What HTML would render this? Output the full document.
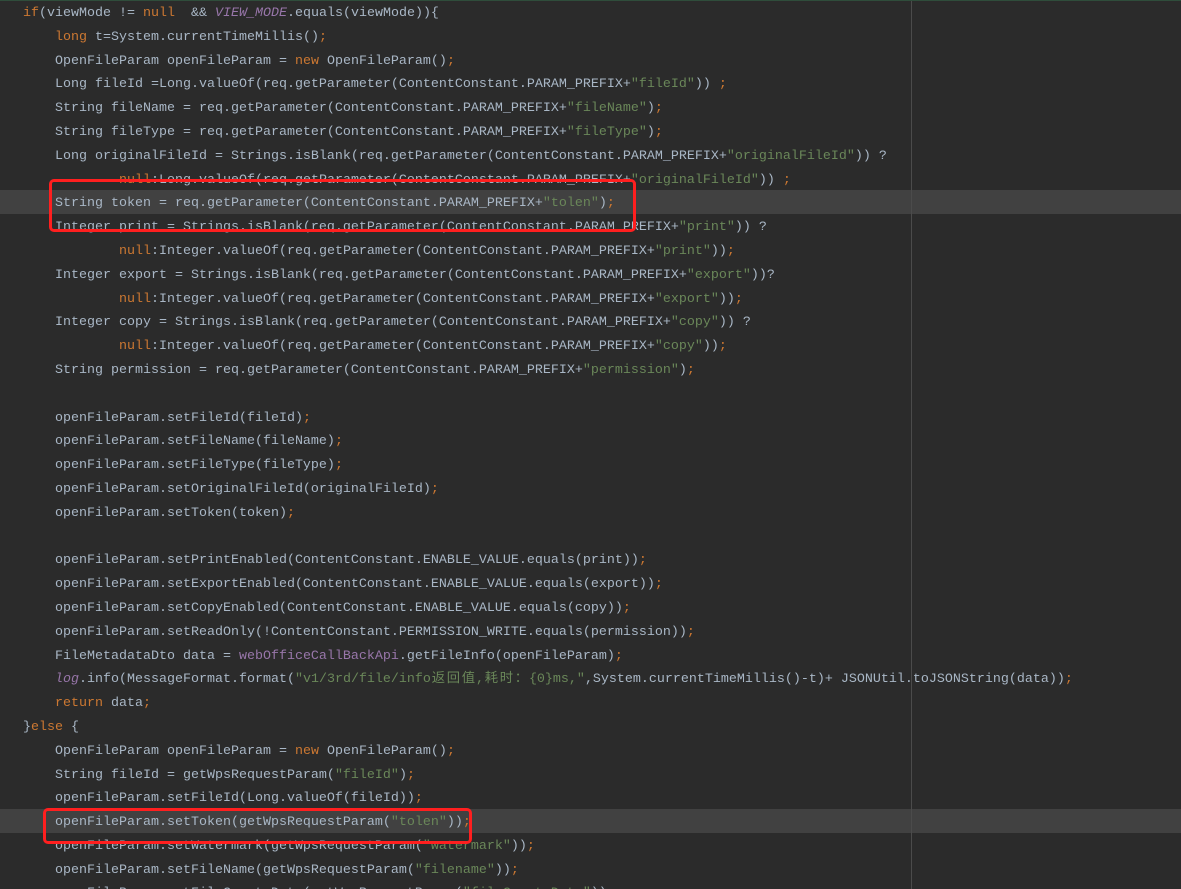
<!DOCTYPE html>
<html><head><meta charset="utf-8"><style>
html,body{margin:0;padding:0;overflow:hidden;}
body{width:1181px;height:889px;background:#2b2b2b;position:relative;}
.top{position:absolute;left:0;top:0;width:1181px;height:1px;background:#2f4d3b;}
.vl{position:absolute;left:911px;top:1px;width:1px;height:888px;background:#4b4b4b;}
.hl{position:absolute;left:0;width:1181px;height:24px;background:#414141;}
.code{position:absolute;left:23px;top:2px;font-family:"Liberation Mono","Noto Sans CJK SC",monospace;font-size:13.33px;color:#a9b7c6;}
.l{height:23.8px;line-height:23.8px;white-space:pre;}
.k{color:#cc7832}.s{color:#6a8759}.p{color:#9876aa;font-style:italic}.f{color:#9876aa}.i{font-style:italic}
.c{display:inline-block;width:15px;text-align:center}
.box{position:absolute;border:3px solid #ff1f1f;border-radius:5px;}
</style></head><body>
<div class="top"></div>
<div class="hl" style="top:190px"></div>
<div class="hl" style="top:809px"></div>
<div class="vl"></div>
<div class="code">
<div class="l"><span class="k">if</span>(viewMode != <span class="k">null</span>  &amp;&amp; <span class="p">VIEW_MODE</span>.equals(viewMode)){</div>
<div class="l">    <span class="k">long</span> t=System.currentTimeMillis()<span class="k">;</span></div>
<div class="l">    OpenFileParam openFileParam = <span class="k">new</span> OpenFileParam()<span class="k">;</span></div>
<div class="l">    Long fileId =Long.valueOf(req.getParameter(ContentConstant.PARAM_PREFIX+<span class="s">"fileId"</span>)) <span class="k">;</span></div>
<div class="l">    String fileName = req.getParameter(ContentConstant.PARAM_PREFIX+<span class="s">"fileName"</span>)<span class="k">;</span></div>
<div class="l">    String fileType = req.getParameter(ContentConstant.PARAM_PREFIX+<span class="s">"fileType"</span>)<span class="k">;</span></div>
<div class="l">    Long originalFileId = Strings.isBlank(req.getParameter(ContentConstant.PARAM_PREFIX+<span class="s">"originalFileId"</span>)) ?</div>
<div class="l">            <span class="k">null</span>:Long.valueOf(req.getParameter(ContentConstant.PARAM_PREFIX+<span class="s">"originalFileId"</span>)) <span class="k">;</span></div>
<div class="l">    String token = req.getParameter(ContentConstant.PARAM_PREFIX+<span class="s">"tolen"</span>)<span class="k">;</span></div>
<div class="l">    Integer print = Strings.isBlank(req.getParameter(ContentConstant.PARAM_PREFIX+<span class="s">"print"</span>)) ?</div>
<div class="l">            <span class="k">null</span>:Integer.valueOf(req.getParameter(ContentConstant.PARAM_PREFIX+<span class="s">"print"</span>))<span class="k">;</span></div>
<div class="l">    Integer export = Strings.isBlank(req.getParameter(ContentConstant.PARAM_PREFIX+<span class="s">"export"</span>))?</div>
<div class="l">            <span class="k">null</span>:Integer.valueOf(req.getParameter(ContentConstant.PARAM_PREFIX+<span class="s">"export"</span>))<span class="k">;</span></div>
<div class="l">    Integer copy = Strings.isBlank(req.getParameter(ContentConstant.PARAM_PREFIX+<span class="s">"copy"</span>)) ?</div>
<div class="l">            <span class="k">null</span>:Integer.valueOf(req.getParameter(ContentConstant.PARAM_PREFIX+<span class="s">"copy"</span>))<span class="k">;</span></div>
<div class="l">    String permission = req.getParameter(ContentConstant.PARAM_PREFIX+<span class="s">"permission"</span>)<span class="k">;</span></div>
<div class="l"> </div>
<div class="l">    openFileParam.setFileId(fileId)<span class="k">;</span></div>
<div class="l">    openFileParam.setFileName(fileName)<span class="k">;</span></div>
<div class="l">    openFileParam.setFileType(fileType)<span class="k">;</span></div>
<div class="l">    openFileParam.setOriginalFileId(originalFileId)<span class="k">;</span></div>
<div class="l">    openFileParam.setToken(token)<span class="k">;</span></div>
<div class="l"> </div>
<div class="l">    openFileParam.setPrintEnabled(ContentConstant.ENABLE_VALUE.equals(print))<span class="k">;</span></div>
<div class="l">    openFileParam.setExportEnabled(ContentConstant.ENABLE_VALUE.equals(export))<span class="k">;</span></div>
<div class="l">    openFileParam.setCopyEnabled(ContentConstant.ENABLE_VALUE.equals(copy))<span class="k">;</span></div>
<div class="l">    openFileParam.setReadOnly(!ContentConstant.PERMISSION_WRITE.equals(permission))<span class="k">;</span></div>
<div class="l">    FileMetadataDto data = <span class="f">webOfficeCallBackApi</span>.getFileInfo(openFileParam)<span class="k">;</span></div>
<div class="l">    <span class="p">log</span>.info(MessageFormat.format(<span class="s">"v1/3rd/file/info<span class="c">返</span><span class="c">回</span><span class="c">值</span>,<span class="c">耗</span><span class="c">时</span><span class="c">：</span>{0}ms,"</span>,System.currentTimeMillis()-t)+ JSONUtil.toJSONString(data))<span class="k">;</span></div>
<div class="l">    <span class="k">return</span> data<span class="k">;</span></div>
<div class="l">}<span class="k">else</span> {</div>
<div class="l">    OpenFileParam openFileParam = <span class="k">new</span> OpenFileParam()<span class="k">;</span></div>
<div class="l">    String fileId = getWpsRequestParam(<span class="s">"fileId"</span>)<span class="k">;</span></div>
<div class="l">    openFileParam.setFileId(Long.valueOf(fileId))<span class="k">;</span></div>
<div class="l">    openFileParam.setToken(getWpsRequestParam(<span class="s">"tolen"</span>))<span class="k">;</span></div>
<div class="l">    openFileParam.setWatermark(getWpsRequestParam(<span class="s">"watermark"</span>))<span class="k">;</span></div>
<div class="l">    openFileParam.setFileName(getWpsRequestParam(<span class="s">"filename"</span>))<span class="k">;</span></div>
<div class="l">    openFileParam.setFileCreateDate(getWpsRequestParam(<span class="s">"fileCreateDate"</span>))<span class="k">;</span></div>
</div>
<div class="box" style="left:49px;top:179px;width:581px;height:47px"></div>
<div class="box" style="left:43px;top:808px;width:423px;height:30px"></div>
</body></html>
